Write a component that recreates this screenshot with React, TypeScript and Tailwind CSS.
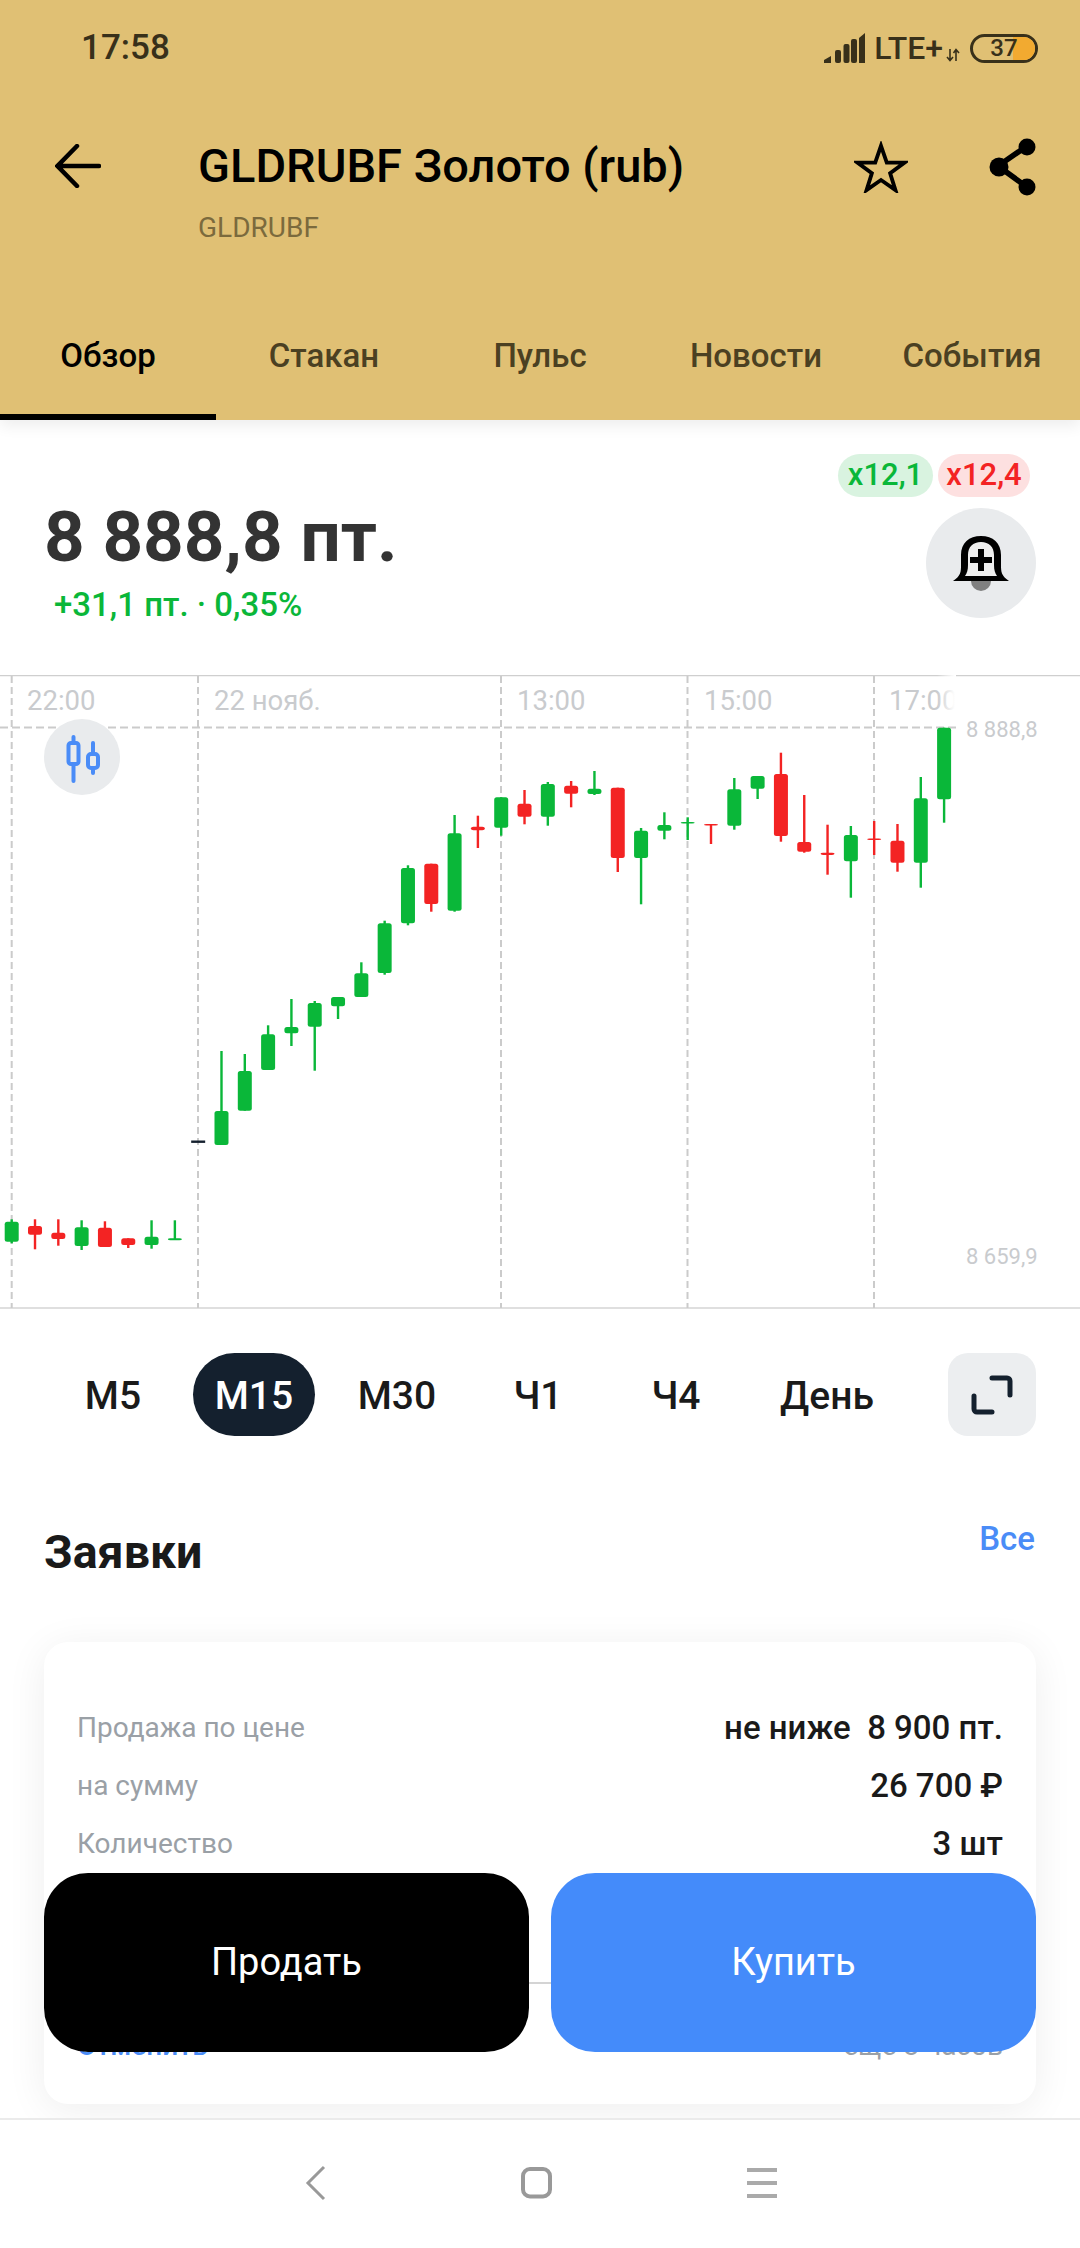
type Candle = {
  x: number
  up: boolean
  bodyTop: number
  bodyBottom: number
  wickTop: number
  wickBottom: number
}

const GREEN = "#0ab739"
const RED = "#f32323"

// up, bodyTop, bodyBottom, wickTop, wickBottom (page pixels)
const rawCandles: [boolean, number, number, number, number][] = [
  [true, 1221.7, 1241.7, 1219.3, 1243.3],
  [false, 1226, 1234.7, 1219.3, 1249.3],
  [false, 1232.7, 1239, 1219.3, 1245.7],
  [true, 1227.3, 1246, 1220.3, 1250],
  [false, 1227.7, 1247, 1221.3, 1247],
  [false, 1238.3, 1245, 1238.3, 1248],
  [true, 1236.7, 1245, 1220.3, 1248.7],
  [true, 1238.3, 1240.3, 1220.3, 1240],
  [true, 0, 0, 0, 0],
  [true, 1111, 1145, 1051, 1145],
  [true, 1071, 1110.7, 1054, 1110.7],
  [true, 1034.3, 1070, 1025.3, 1070],
  [true, 1027, 1033.3, 999, 1046],
  [true, 1003, 1026.7, 1001, 1070.7],
  [true, 997, 1006.3, 997, 1019],
  [true, 973.3, 997, 962.3, 997],
  [true, 923.3, 973, 920.7, 974.7],
  [true, 868, 923.3, 865.3, 925.3],
  [false, 863.7, 904, 863.7, 911.7],
  [true, 833.3, 910.7, 815, 911.7],
  [false, 826.7, 830.3, 815.7, 848],
  [true, 797.3, 827.7, 797.3, 835.7],
  [false, 803.7, 816.7, 790, 824.3],
  [true, 784, 816.7, 782, 825.7],
  [false, 785.7, 793.7, 781, 807.3],
  [true, 788.7, 794, 771, 795],
  [false, 787.7, 858, 787.7, 872],
  [true, 830.7, 858, 828, 904.3],
  [true, 825, 830.7, 812.3, 839.3],
  [true, 822, 823.6, 817.3, 840],
  [false, 824, 825.6, 824, 844],
  [true, 789.3, 825.7, 778, 829.7],
  [true, 776, 788.7, 776, 799],
  [false, 774, 836, 752.7, 841.7],
  [false, 842, 851.7, 795, 852.7],
  [false, 852.7, 855, 824.7, 874.7],
  [true, 835, 861.3, 826, 897.7],
  [false, 838.5, 840, 821, 855],
  [false, 840.7, 862.7, 824, 871.7],
  [true, 798.3, 862.7, 777, 887.7],
  [true, 727.7, 799.3, 727.7, 822.7],
]

const candles: Candle[] = rawCandles.map((c, i) => ({
  x: 11.7 + i * 23.31,
  up: c[0],
  bodyTop: c[1],
  bodyBottom: c[2],
  wickTop: c[3],
  wickBottom: c[4],
}))

const gridX = [11.7, 198, 501, 687.5, 874]
const timeLabels: [number, string][] = [
  [27, "22:00"],
  [214, "22 нояб."],
  [517, "13:00"],
  [704, "15:00"],
  [889, "17:00"],
]

const Chart = () => (
  <svg viewBox="0 675 1080 634" className="block h-[634px] w-[1080px] font-['Roboto',sans-serif]">
    <defs>
      <linearGradient id="fade" x1="0" x2="1" y1="0" y2="0">
        <stop offset="0" stopColor="#fff" stopOpacity="0" />
        <stop offset="1" stopColor="#fff" />
      </linearGradient>
    </defs>
    <line x1="0" x2="1080" y1="675.5" y2="675.5" stroke="#cfcfcf" strokeWidth="1.5" />
    <line x1="0" x2="1080" y1="1308" y2="1308" stroke="#d4d4d4" strokeWidth="1.5" />
    {gridX.map((x) => (
      <line key={x} x1={x} x2={x} y1="676" y2="1308" stroke="#cbcbcb" strokeWidth="2" strokeDasharray="7 4" />
    ))}
    <line x1="0" x2="956" y1="727.5" y2="727.5" stroke="#cbcbcb" strokeWidth="2" strokeDasharray="8 4" />
    {timeLabels.map(([x, label]) => (
      <text key={label} x={x} y="710" fontSize="27.5" fill="#c9cbce">
        {label}
      </text>
    ))}
    <rect x="937" y="674" width="18" height="44" fill="url(#fade)" />
    <rect x="955" y="674" width="125" height="44" fill="#fff" />
    <line x1="956" x2="1080" y1="675.5" y2="675.5" stroke="#cfcfcf" strokeWidth="1.5" />
    <text x="966" y="736.500" fontSize="22" fill="#c9cbce">
      8 888,8
    </text>
    <text x="966" y="1263.500" fontSize="22" fill="#c9cbce">
      8 659,9
    </text>
    {candles.map((c, i) => {
      if (i === 8) {
        return <rect key={i} x={c.x - 7} y="1140.5" width="14" height="2.4" fill="#14202e" />
      }
      const color = c.up ? GREEN : RED
      return (
        <g key={i} fill={color}>
          <rect x={c.x - 1.2} y={c.wickTop} width="2.4" height={c.wickBottom - c.wickTop} />
          <rect x={c.x - 7} y={c.bodyTop} width="14" height={c.bodyBottom - c.bodyTop} rx="2.5" />
        </g>
      )
    })}
    <circle cx="82" cy="757" r="38" fill="#e9ebed" />
    <g fill="none" stroke="#4a8cf7" strokeWidth="4" strokeLinecap="round">
      <line x1="73.5" x2="73.5" y1="737" y2="741" />
      <line x1="73.5" x2="73.5" y1="764" y2="781" />
      <rect x="68.5" y="743" width="10" height="21" rx="2.5" />
      <line x1="93" x2="93" y1="743" y2="752" />
      <line x1="93" x2="93" y1="768" y2="773" />
      <rect x="88" y="754" width="10" height="14" rx="3" />
    </g>
  </svg>
)

const StatusBar = () => (
  <div className="flex h-[94px] items-start justify-between pl-[81px] pr-[42px] pt-[29px] text-[#38301a]">
    <span className="text-[35px] font-medium leading-[38px]">17:58</span>
    <div className="flex items-center">
      <svg width="41" height="30" viewBox="0 0 41 30" fill="#38301a">
        <path d="M0 30v-3l7-4v7z" />
        <rect x="11" y="17" width="6" height="13" rx="2" />
        <rect x="19.5" y="11" width="6" height="19" rx="2" />
        <rect x="27" y="6" width="6" height="24" rx="2" />
        <path d="M35 5l6-5v30h-6z" />
      </svg>
      <span className="ml-[9px] text-[32px] font-medium leading-[38px]">LTE+</span>
      <svg width="14" height="14" viewBox="0 0 14 14" className="ml-[3px] mt-[13px]" fill="none" stroke="#38301a" strokeWidth="1.6">
        <path d="M4 1v11M1 9l3 3.5L7 9" />
        <path d="M10 13V2M7.5 5L10 1.5 13 5" />
      </svg>
      <div className="relative ml-[10px] flex h-[29px] w-[68px] items-center justify-center overflow-hidden rounded-full border-[3px] border-[#38301a] text-[24px] font-medium">
        <div className="absolute bottom-0 right-0 top-0 w-[22px] bg-[#f2aa30]" />
        <span className="relative">37</span>
      </div>
    </div>
  </div>
)

const Toolbar = () => (
  <div className="flex h-[168px] items-start">
    <svg width="46" height="44" viewBox="0 0 46 44" className="ml-[55px] mt-[50px]" fill="none" stroke="#000" strokeWidth="4.5" strokeLinecap="round">
      <path d="M44 22H3M22 2L2.5 22 22 42" />
    </svg>
    <div className="ml-[97px] flex-1">
      <div className="mt-[45px] text-[47px] font-medium leading-[54px] text-black">GLDRUBF Золото (rub)</div>
      <div className="mt-[18px] text-[28px] leading-[34px] text-[#7b6a3d]">GLDRUBF</div>
    </div>
    <svg width="54" height="52" viewBox="0 0 56 54" className="mt-[47px]" fill="none" stroke="#000" strokeWidth="4">
      <path d="M28 5l6 17.5h18.5L37.5 33.5l5.5 17.5L28 40.500 13 51l5.500-17.500L3.500 22.500H22z" strokeLinejoin="miter" />
    </svg>
    <svg width="52" height="58" viewBox="0 0 50 58" className="ml-[78px] mr-[42px] mt-[44px]" fill="#000" stroke="#000">
      <path d="M40 8L11 28l29 21" fill="none" strokeWidth="5.500" />
      <circle cx="40" cy="9" r="8.500" stroke="none" />
      <circle cx="12" cy="29" r="9.500" stroke="none" />
      <circle cx="40" cy="49" r="8.500" stroke="none" />
    </svg>
  </div>
)

const tabs = ["Обзор", "Стакан", "Пульс", "Новости", "События"]

const Tabs = () => (
  <div className="flex h-[158px]">
    {tabs.map((tab, i) => (
      <div key={tab} className="flex w-[216px] flex-col">
        <div
          className={
            i === 0
              ? "flex flex-1 items-center justify-center pt-[36px] text-[33px] font-medium text-black"
              : "flex flex-1 items-center justify-center pt-[36px] text-[33px] font-medium text-[#4b4022]"
          }
        >
          {tab}
        </div>
        <div className={i === 0 ? "h-[6px] bg-black" : "h-[6px]"} />
      </div>
    ))}
  </div>
)

const PriceBlock = () => (
  <div className="relative h-[255px]">
    <div className="pl-[44px] pt-[74px] text-[71px] font-bold leading-[86px] text-[#333333]">8 888,8 пт.</div>
    <div className="pl-[54px] pt-[6px] text-[33px] font-medium leading-[38px] text-[#0ab739]">+31,1 пт. · 0,35%</div>
    <div className="absolute right-[50px] top-[34px] flex gap-[5px]">
      <span className="flex h-[43px] w-[95px] items-center justify-center rounded-full bg-[#d9f3e0] text-[31px] font-medium text-[#0ab739]">x12,1</span>
      <span className="flex h-[43px] w-[92px] items-center justify-center rounded-full bg-[#fde0e0] text-[31px] font-medium text-[#f32323]">x12,4</span>
    </div>
    <div className="absolute right-[44px] top-[88px] flex h-[110px] w-[110px] items-center justify-center rounded-full bg-[#e9ebed]">
      <svg width="56" height="56" viewBox="0 0 56 56">
        <path d="M18 46a10 10 0 0 0 20 0z" fill="#808080" />
        <path d="M0 46c8-5 8-10 8-16V20C8 8 16 1 28 1s20 7 20 19v10c0 6 0 11 8 16z" fill="#000" />
        <path d="M12 41c2-3 3-6 3-11V20c0-8 5-13 13-13s13 5 13 13v10c0 5 1 8 3 11z" fill="#eeeeee" />
        <path d="M25 14h6v8h8v6h-8v8h-6v-8h-8v-6h8z" fill="#000" />
      </svg>
    </div>
  </div>
)

const frames = [
  { label: "M5", width: "w-[142px]" },
  { label: "M15", width: "w-[140px]" },
  { label: "M30", width: "w-[146px]" },
  { label: "Ч1", width: "w-[136px]" },
  { label: "Ч4", width: "w-[140px]" },
  { label: "День", width: "w-[162px]" },
]

const Timeframes = () => (
  <div className="mt-[44px] flex h-[83px] items-center pl-[42px] pr-[44px]">
    {frames.map((frame) => (
      <div key={frame.label} className={`flex justify-center ${frame.width}`}>
        <div
          className={
            frame.label === "M15"
              ? "flex h-[83px] w-[122px] items-center justify-center rounded-full bg-[#14202e] pt-[4px] text-[39px] font-medium text-white"
              : "flex h-[83px] w-[122px] items-center justify-center pt-[4px] text-[39px] font-medium text-[#1a1a1a]"
          }
        >
          {frame.label}
        </div>
      </div>
    ))}
    <div className="ml-auto flex h-[83px] w-[88px] items-center justify-center rounded-[20px] bg-[#eceef0]">
      <svg width="44" height="42" viewBox="0 0 44 42" fill="none" stroke="#14202e" strokeWidth="5" strokeLinecap="round" strokeLinejoin="round">
        <path d="M22 4h15a3 3 0 0 1 3 3v14" />
        <path d="M4 22v13a3 3 0 0 0 3 3h15" />
      </svg>
    </div>
  </div>
)

const orderRows = [
  ["Продажа по цене", "не ниже  8 900 пт."],
  ["на сумму", "26 700 ₽"],
  ["Количество", "3 шт"],
]

const OrderCard = () => (
  <div className="mx-[44px] h-[462px] rounded-[24px] bg-white pt-[57px] shadow-[0_6px_40px_rgba(0,0,0,0.07)]">
    {orderRows.map(([label, value]) => (
      <div key={label} className="flex h-[58px] items-center justify-between px-[33px]">
        <span className="text-[28px] text-[#9aa0a6]">{label}</span>
        <span className="whitespace-pre text-[33px] font-medium text-[#1a1a1a]">{value}</span>
      </div>
    ))}
    <div className="mt-[109px] h-[1.5px] bg-[#d4d4d4]" />
    <div className="mt-[44px] flex items-center justify-between px-[33px] leading-[36px]">
      <span className="text-[28px] font-medium text-[#4a8cf7]">Отменить</span>
      <span className="text-[28px] text-[#9aa0a6]">ещё 8 часов</span>
    </div>
  </div>
)

const NavBar = () => (
  <div className="mt-[14px] flex h-[130px] justify-center border-t-2 border-[#ebebeb] bg-white">
    <svg width="500" height="48" viewBox="0 0 500 48" className="mt-[38px]" fill="none" stroke="#999999">
      <path d="M34 9L18 25l16 16" strokeWidth="3" />
      <rect x="233" y="11" width="27" height="27.500" rx="7" strokeWidth="4" />
      <path d="M457 12h30M457 25h30M457 38h30" strokeWidth="4" stroke="#aaaaaa" />
    </svg>
  </div>
)

export default function App() {
  return (
    <div className="relative h-[2248px] w-[1080px] overflow-hidden bg-white font-['Roboto',sans-serif]">
      <header className="relative z-10 h-[420px] bg-[#e0c074] shadow-[0_6px_14px_rgba(0,0,0,0.07)]">
        <StatusBar />
        <Toolbar />
        <Tabs />
      </header>
      <PriceBlock />
      <Chart />
      <Timeframes />
      <div className="flex h-[206px] items-start justify-between px-[44px] pt-[89px]">
        <span className="text-[46.500px] font-bold leading-[54px] text-[#1a1a1a]">Заявки</span>
        <span className="-mt-[6px] mr-[1px] text-[33px] font-medium leading-[40px] text-[#4a8cf7]">Все</span>
      </div>
      <OrderCard />
      <NavBar />
      <div className="absolute left-[44px] right-[44px] top-[1873px] flex gap-[22px] text-[38px] text-white">
        <button className="flex h-[179px] flex-1 items-center justify-center rounded-[44px] bg-black">Продать</button>
        <button className="flex h-[179px] flex-1 items-center justify-center rounded-[44px] bg-[#448bfa]">Купить</button>
      </div>
    </div>
  )
}
